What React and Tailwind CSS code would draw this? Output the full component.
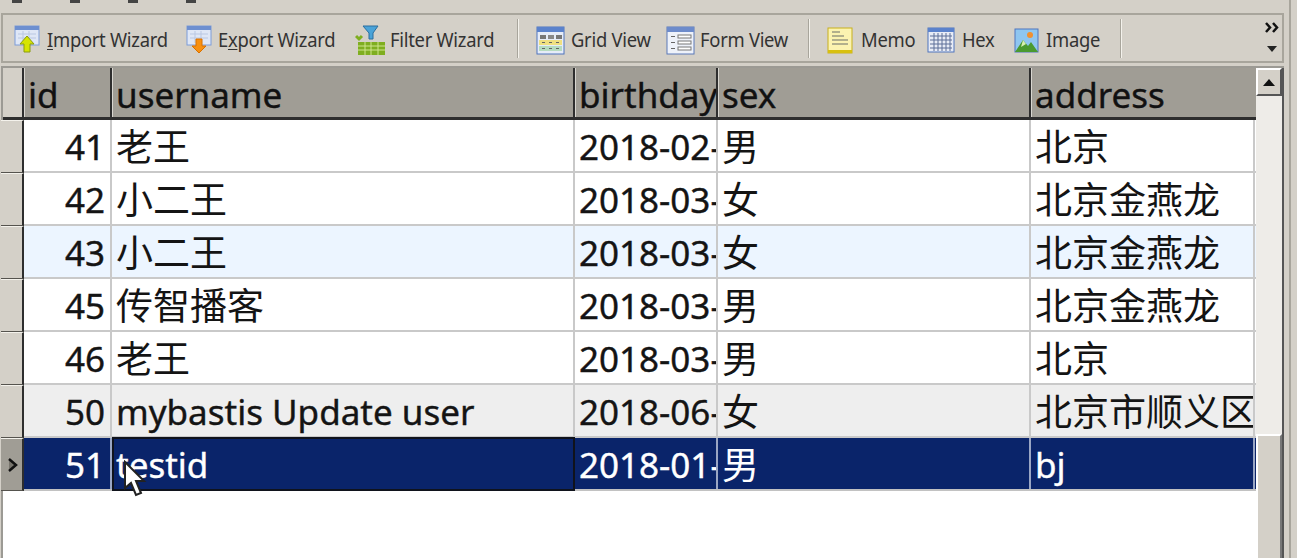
const COLS = ["w-[88px]", "w-[463px]", "w-[143px]", "w-[313px]", "w-[224px]"];

const ROWS = [
  ["41", "老王", "2018-02-", "男", "北京"],
  ["42", "小二王", "2018-03-", "女", "北京金燕龙"],
  ["43", "小二王", "2018-03-", "女", "北京金燕龙"],
  ["45", "传智播客", "2018-03-", "男", "北京金燕龙"],
  ["46", "老王", "2018-03-", "男", "北京"],
  ["50", "mybastis Update user", "2018-06-", "女", "北京市顺义区"],
  ["51", "testid", "2018-01-", "男", "bj"],
];

const FONT = "font-['Noto_Sans','Noto_Sans_CJK_SC',sans-serif]";

function TableIcon({ arrow }) {
  return (
    <svg width="26" height="30" viewBox="0 0 26 30" className="shrink-0">
      <rect x="1" y="1" width="24" height="19" fill="#dfe7f6" stroke="#7d9cd8" />
      <rect x="1" y="1" width="24" height="4" fill="#6d8fd0" />
      <path d="M4 9h18M4 13h18M9 6v12M15 6v12" stroke="#b9c7e2" />
      {arrow === "up" ? (
        <path d="M13 11l7 8h-4v8h-6v-8H6z" fill="#d6e400" stroke="#8a9c10" />
      ) : (
        <path d="M10 14h6v7h4l-7 7-7-7h4z" fill="#f89010" stroke="#d87000" />
      )}
    </svg>
  );
}

function FilterIcon() {
  return (
    <svg width="31" height="31" viewBox="0 0 31 31" className="shrink-0">
      <path d="M8 1h15l-5 7v6h-4V8z" fill="#4aa3d8" stroke="#2a6f9f" />
      <rect x="3" y="17" width="27" height="13" fill="#7fae20" />
      <path d="M3 21h27M3 25h27M10 17v13M16 17v13M23 17v13" stroke="#cfe58c" />
      <path d="M1 11l3 3 3-3" stroke="#7fae20" strokeWidth="3" fill="none" />
    </svg>
  );
}

function GridIcon() {
  return (
    <svg width="29" height="29" viewBox="0 0 29 29" className="shrink-0">
      <rect x="1" y="1" width="27" height="27" fill="#e6ecf8" stroke="#4f75bd" />
      <rect x="1" y="1" width="27" height="5" fill="#5b82cc" />
      <rect x="4" y="9" width="6" height="4" fill="#777" />
      <rect x="12" y="9" width="6" height="4" fill="#888" />
      <rect x="20" y="9" width="6" height="4" fill="#777" />
      <rect x="3" y="14" width="23" height="5" fill="#f0e080" />
      <rect x="3" y="20" width="23" height="5" fill="#b6dcc0" />
      <path d="M6 16.500h3M13 16.500h3M20 16.500h3M6 22.500h3M13 22.500h3M20 22.500h3" stroke="#666" />
    </svg>
  );
}

function FormIcon() {
  return (
    <svg width="29" height="29" viewBox="0 0 29 29" className="shrink-0">
      <rect x="1" y="1" width="27" height="27" fill="#eef2fa" stroke="#5a78b8" />
      <rect x="1" y="1" width="27" height="5" fill="#6d8bcb" />
      <rect x="12" y="9" width="13" height="3" fill="#fff" stroke="#777" />
      <rect x="12" y="15" width="13" height="3" fill="#fff" stroke="#777" />
      <rect x="12" y="21" width="13" height="3" fill="#fff" stroke="#777" />
      <path d="M5 10.500h4M5 16.500h4M5 22.500h4" stroke="#666" />
    </svg>
  );
}

function MemoIcon() {
  return (
    <svg width="26" height="27" viewBox="0 0 26 27" className="shrink-0">
      <rect x="1" y="1" width="24" height="25" fill="#fbf3b0" stroke="#c7b01c" />
      <rect x="1" y="23" width="24" height="3" fill="#d8c010" />
      <path d="M5 5h8M5 9h12M5 13h16M5 17h16" stroke="#9a9a80" strokeWidth="1.500" />
    </svg>
  );
}

function HexIcon() {
  return (
    <svg width="28" height="26" viewBox="0 0 28 26" className="shrink-0">
      <rect x="1" y="1" width="26" height="24" fill="#e8ecf6" stroke="#4f75bd" />
      <rect x="1" y="1" width="26" height="4" fill="#5b82cc" />
      <path d="M3 9h22M3 13h22M3 17h22M3 21h22M7 6v18M11 6v18M15 6v18M19 6v18M23 6v18" stroke="#5d6f98" />
    </svg>
  );
}

function ImageIcon() {
  return (
    <svg width="25" height="25" viewBox="0 0 25 25" className="shrink-0">
      <rect x="1" y="1" width="23" height="23" fill="#8fc6f0" stroke="#4f75bd" />
      <path d="M1 24l8-12 5 6 3-4 7 10z" fill="#4a9a30" />
      <path d="M9 12l3 4-5 3z" fill="#d6f0b0" />
      <circle cx="16" cy="7" r="3" fill="#f09030" />
    </svg>
  );
}

function Tool({ icon, gap = "gap-[4px]", children, className = "" }) {
  return (
    <div className={`flex items-center ${gap} ${className}`}>
      {icon}
      <span className="text-[20px] tracking-[-0.3px] leading-none text-[#333] scale-x-[0.92] origin-left whitespace-nowrap">{children}</span>
    </div>
  );
}

function Sep() {
  return <div className="w-[2px] h-[39px] mt-[-4px] bg-[#f4f2ec] border-l border-[#a8a59c]" />;
}

function Cell({ width, right, cjk, children, className = "" }) {
  return (
    <div className={`${width} shrink-0 h-full overflow-hidden whitespace-nowrap pl-[4px] pr-[5px] pt-[2px] flex items-center border-r-2 ${right ? "justify-end" : ""} ${cjk ? "text-[37px] [-webkit-text-stroke:0px]" : "[-webkit-text-stroke:0.4px]"} ${className}`}>
      {children}
    </div>
  );
}

function Row({ row, index }) {
  const selected = index === 6;
  const bg = selected ? "bg-[#0a246a]" : index === 2 ? "bg-[#ecf5ff]" : index === 5 ? "bg-[#eeeeee]" : "bg-white";
  const text = selected ? "text-white" : "text-[#141414]";
  return (
    <div className="flex h-[53px]">
      <div className={`w-[23px] shrink-0 border-r-2 border-b border-r-[#2e2e2e] border-b-[#55534e] border-t border-t-[#f4f2ec] flex items-center ${selected ? "bg-[#a09d95]" : "bg-[#d4d0c8]"}`}>
        {selected && (
          <svg width="14" height="16" viewBox="0 0 14 16" className="ml-[5px]">
            <path d="M3 2l7 6-7 6" fill="#77746c" stroke="#111" strokeWidth="2.500" />
          </svg>
        )}
      </div>
      <div className={`flex flex-1 min-w-0 border-b-2 ${selected ? "border-b-[#c2c2c2]" : "border-b-[#c9c9c9]"} ${bg} ${text} relative`}>
        {row.map((v, i) => (
          <Cell key={i} width={COLS[i]} right={i === 0} cjk={/[^\x00-\x7f]/.test(v)} className={selected ? "border-r-[#9aa6c4]" : "border-r-[#c9c9c9]"}>
            {v}
          </Cell>
        ))}
        {selected && (
          <div className="absolute left-[88px] top-[-1px] w-[463px] h-[54px] border-2 border-[#10131c] pointer-events-none" />
        )}
      </div>
    </div>
  );
}

export default function App() {
  return (
    <div className={`w-[1297px] h-[558px] overflow-hidden bg-[#d4d0c8] flex ${FONT}`}>
      <div className="w-[1284px] shrink-0 flex flex-col">
        <div className="h-[13px] shrink-0 flex items-start pl-[12px] gap-[48px]">
          {[0, 1, 2, 3].map((k) => (
            <div key={k} className="w-[10px] h-[3px] bg-[#444]" />
          ))}
        </div>

        <div className="h-[50px] shrink-0 ml-[1px] border-2 border-[#a8a59c] flex items-center pl-[11px] pt-[4px] relative">
          <Tool className="w-[172px]" gap="gap-[7px]" icon={<TableIcon arrow="up" />}><span className="underline decoration-1 underline-offset-2">I</span>mport Wizard</Tool>
          <Tool className="w-[169px]" gap="gap-[6px]" icon={<TableIcon arrow="down" />}>E<span className="underline decoration-1 underline-offset-2">x</span>port Wizard</Tool>
          <Tool className="w-[162px]" gap="gap-[4px]" icon={<FilterIcon />}>Filter Wizard</Tool>
          <Sep />
          <Tool className="w-[130px] ml-[17px]" gap="gap-[6px]" icon={<GridIcon />}>Grid View</Tool>
          <Tool className="w-[142px]" gap="gap-[5px]" icon={<FormIcon />}>Form View</Tool>
          <Sep />
          <Tool className="w-[100px] ml-[17px]" gap="gap-[8px]" icon={<MemoIcon />}>Memo</Tool>
          <Tool className="w-[87px]" gap="gap-[7px]" icon={<HexIcon />}>Hex</Tool>
          <Tool className="w-[106px]" gap="gap-[7px]" icon={<ImageIcon />}>Image</Tool>
          <Sep />
          <div className="absolute right-[2px] top-[7px] w-[16px] flex flex-col items-center">
            <svg width="15" height="11" viewBox="0 0 15 11">
              <path d="M1 1l4 4.500-4 4.500M8 1l4 4.500-4 4.500" fill="none" stroke="#111" strokeWidth="2.500" />
            </svg>
            <svg width="10" height="6" viewBox="0 0 10 6" className="mt-[13px]"><path d="M0 0h10L5 6z" fill="#222" /></svg>
          </div>
        </div>

        <div className="flex-1 min-h-0 mt-[3px] ml-[1px] border-l-2 border-t-2 border-[#9c9a94] bg-white flex text-[35px] leading-none">
          <div className="flex-1 min-w-0">
            <div className="flex h-[52px] bg-[#a09d95] border-b-[3px] border-[#2e2e2e] text-[#111] [-webkit-text-stroke:0.4px]">
              <div className="w-[21px] shrink-0 bg-[#d4d0c8] border-r-2 border-[#2e2e2e]" />
              {["id", "username", "birthday", "sex", "address"].map((h, i) => (
                <div key={h} className={`${COLS[i]} shrink-0 overflow-hidden whitespace-nowrap pl-[3px] pt-[3px] flex items-center border-r-2 border-r-[#2e2e2e] border-l border-l-[#d8d6d0] last:border-r-0`}>
                  {h}
                </div>
              ))}
            </div>
            <div className="ml-[-2px]">
              {ROWS.map((r, i) => (
                <Row key={r[0]} row={r} index={i} />
              ))}
            </div>
          </div>
          <div className="w-[28px] shrink-0 flex flex-col border-r-[2px] border-[#555]">
            <div className="h-[28px] shrink-0 bg-[#d4d0c8] border-2 border-t-white border-l-white border-r-[#555] border-b-[#555] flex items-center justify-center">
              <svg width="12" height="7" viewBox="0 0 12 7"><path d="M6 0l6 7H0z" fill="#111" /></svg>
            </div>
            <div className="h-[338px] shrink-0 bg-[#eeece8]" />
            <div className="flex-1 bg-[#d4d0c8] border-2 border-t-white border-l-white border-r-[#777] border-b-0" />
          </div>
        </div>
      </div>

      <div className="w-[2px] h-full ml-[5px] bg-[#a8a59c]" />

      <svg width="26" height="38" viewBox="0 0 26 38" className="absolute left-[122px] top-[460px]">
        <path d="M3 2v26l6-5 5 12 5-2-5-12h8z" fill="#fff" stroke="#222" strokeWidth="2" />
      </svg>
    </div>
  );
}
